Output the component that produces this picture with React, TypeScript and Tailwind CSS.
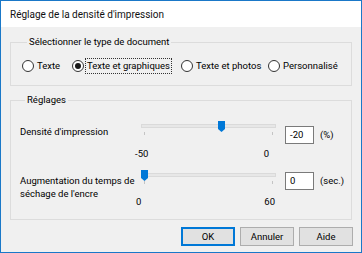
import React from "react";

const FONT = "font-['Roboto',sans-serif]";

interface SliderProps {
  min: number;
  max: number;
  value: number;
}

function Slider({ min, max, value }: SliderProps) {
  // thumb travels between the two tick marks
  const pct = (value - min) / (max - min);
  const left = -1 + pct * 128;
  return (
    <div className="w-[136px] flex flex-col">
      <div className="relative h-[10px] flex items-center">
        <div className="-ml-[1px] w-[135px] h-[4px] bg-[#e7e7e7] border border-[#dadada]" />
        <svg
          className="absolute top-0"
          style={{ left }}
          width="7"
          height="11"
          viewBox="0 0 7 11"
        >
          <path d="M0 0 H7 V8 L3.5 11 L0 8 Z" fill="#0078d7" />
        </svg>
      </div>
      <div className="flex justify-between pl-[2px] pr-[5px] mt-[1px]">
        <span className="w-px h-[3px] bg-[#c4c4c4]" />
        <span className="w-px h-[3px] bg-[#c4c4c4]" />
      </div>
    </div>
  );
}

function Radio({ label, checked, focused, width }: { label: string; checked?: boolean; focused?: boolean; width: string }) {
  return (
    <div className={`flex items-center whitespace-nowrap ${width}`}>
      <span className="w-[12px] h-[12px] rounded-full border border-[#333] bg-white flex items-center justify-center shrink-0">
        {checked && <span className="w-[6px] h-[6px] rounded-full bg-[#1a1a1a]" />}
      </span>
      <span
        className={`ml-[1px] px-[1px] leading-[14px] border border-dotted ${focused ? "border-[#333]" : "border-transparent"}`}
      >
        {label}
      </span>
    </div>
  );
}

export default function App() {
  return (
    <div className={`w-[362px] h-[253px] border border-[#1a78c8] bg-[#f0f0f0] flex flex-col text-[9.5px] text-black whitespace-nowrap ${FONT}`}>
      {/* Title bar */}
      <div className="h-[26px] bg-white flex items-center pl-[9px] text-[10px] text-[#111]">
        Réglage de la densité d'impression
      </div>

      {/* Document type */}
      <fieldset className="mx-[9px] mt-[8px] h-[51px] border border-[#dcdcdc] pl-[11px]">
        <legend className="ml-[5px] px-[2px] leading-[14px]">Sélectionner le type de document</legend>
        <div className="flex items-center mt-[9px]">
          <Radio label="Texte" width="w-[50px]" />
          <Radio label="Texte et graphiques" width="w-[109px]" checked focused />
          <Radio label="Texte et photos" width="w-[87px]" />
          <Radio label="Personnalisé" width="w-[80px]" />
        </div>
      </fieldset>

      {/* Settings */}
      <fieldset className="mx-[9px] mt-[7px] h-[127px] border border-[#dcdcdc] pl-[9px]">
        <legend className="ml-[5px] px-[2px] leading-[14px]">Réglages</legend>

        <div className="flex mt-[16px]">
          <div className="w-[122px] mt-[2px] leading-[14px]">Densité d'impression</div>
          <div className="flex flex-col mt-[-2px]">
            <Slider min={-50} max={0} value={-20} />
            <div className="flex justify-between -ml-[7px] pr-[9px] mt-[13px] leading-[12px]">
              <span>-50</span>
              <span>0</span>
            </div>
          </div>
          <div className="ml-[7px] mt-[3px] w-[29px] h-[18px] bg-white border border-[#7a7a7a] pl-[4px] leading-[16px]">-20</div>
          <span className="ml-[6px] mt-[3px] leading-[17px]">(%)</span>
        </div>

        <div className="flex mt-[12px]">
          <div className="w-[122px] mt-[2px] leading-[13px]">
            Augmentation du temps de
            <br />
            séchage de l'encre
          </div>
          <div className="flex flex-col mt-[-2px]">
            <Slider min={0} max={60} value={0} />
            <div className="flex justify-between -ml-[6px] pr-[3px] mt-[12px] leading-[12px]">
              <span>0</span>
              <span>60</span>
            </div>
          </div>
          <div className="ml-[7px] w-[29px] h-[18px] bg-white border border-[#7a7a7a] pl-[4px] leading-[16px]">0</div>
          <span className="ml-[6px] leading-[17px]">(sec.)</span>
        </div>
      </fieldset>

      {/* Buttons */}
      <div className="flex justify-end gap-[5px] mr-[8px] mt-[7px]">
        <button className="w-[54px] h-[19px] bg-[#e1e1e1] border-2 border-[#0078d7] leading-none">OK</button>
        <button className="w-[54px] h-[19px] bg-[#e1e1e1] border border-[#adadad] leading-none">Annuler</button>
        <button className="w-[54px] h-[19px] bg-[#e1e1e1] border border-[#adadad] leading-none">Aide</button>
      </div>
    </div>
  );
}
